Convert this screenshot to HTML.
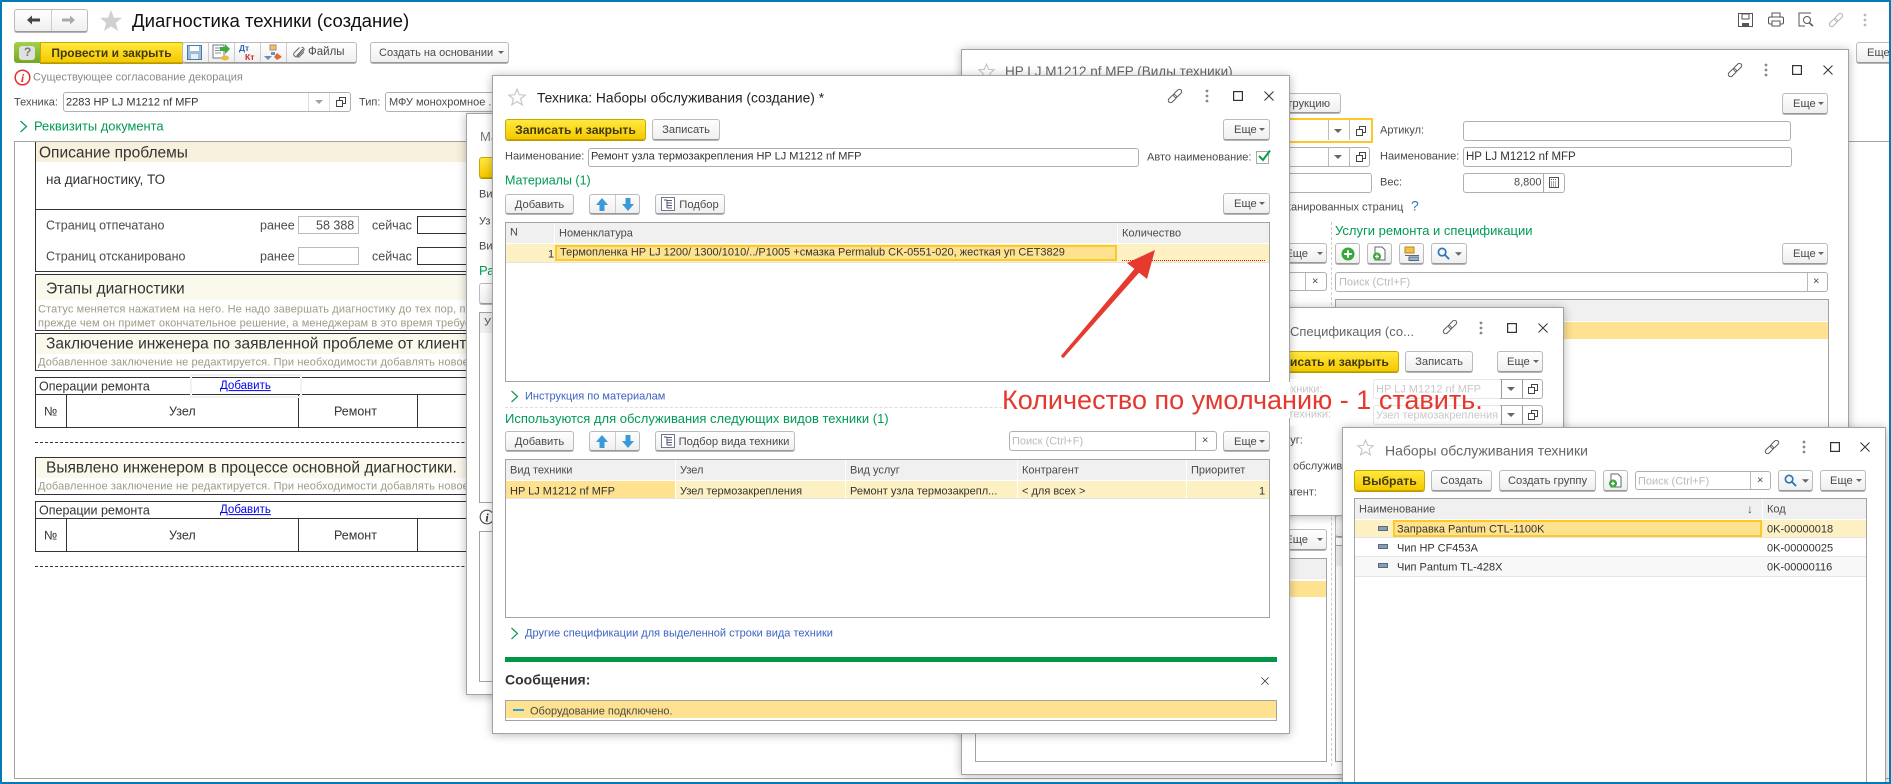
<!DOCTYPE html>
<html><head><meta charset="utf-8"><style>
html,body{margin:0;padding:0;background:#fff}
#p{position:relative;width:1891px;height:784px;overflow:hidden;background:#fff;font-family:"Liberation Sans",sans-serif}
#p div,#p svg{position:absolute;box-sizing:border-box}
.t{white-space:nowrap;transform:translateY(calc(-50% + 3px));font-size:11px;line-height:1.2;color:#4a4a4a}
.d{color:#333}.g{color:#009a54;font-size:13px;transform:translateY(calc(-50% + 2px))}.l{color:#3b62c0;font-size:11px}
.w{background:#fff;border:1px solid #a3a3a3;box-shadow:0 1px 9px rgba(0,0,0,.28)}
.b{border:1px solid #bbb;border-bottom:1px solid #999;border-radius:3px;background:linear-gradient(#fff,#efefef);box-shadow:0 1px 0 #b5b5b5;font-size:11.2px;color:#4a4a4a;text-align:center;line-height:20px;white-space:nowrap}
.y{border:1px solid #c9a900;border-radius:3px;background:linear-gradient(#ffe93f,#f6c900);box-shadow:0 1px 0 #b59a00;font-size:12.2px;font-weight:bold;color:#413a10;text-align:center;line-height:20px;white-space:nowrap}
.f{border:1px solid #b0b0b0;border-radius:3px;background:#fff}
.k{background:#333}.h{background:#f0f0f0}.r{background:#fdf1c4}.s{background:#fee28f}
.c{background:#fee28f;border:2px solid #fcc92a}
.n{color:#a09a84;font-size:11px;letter-spacing:.12px}
.x{background:#fbf8ec}
</style></head><body><div id="p">
<svg width="0" height="0"><defs>
<symbol id="star" viewBox="0 0 24 24"><polygon points="12,1.5 15,9 23,9.5 16.8,14.5 19,22.5 12,18 5,22.5 7.2,14.5 1,9.5 9,9" fill="none" stroke="#c4c4c4" stroke-width="1.5"/></symbol>
<symbol id="link" viewBox="0 0 16 16"><g transform="rotate(-45 8 8)" fill="none" stroke="#555" stroke-width="1"><rect x="-.5" y="5.7" width="9.5" height="4.6" rx="2.3"/><rect x="7" y="5.7" width="9.5" height="4.6" rx="2.3"/></g></symbol>
<symbol id="dots" viewBox="0 0 6 14"><circle cx="3" cy="2" r="1.4" fill="#888"/><circle cx="3" cy="7" r="1.4" fill="#888"/><circle cx="3" cy="12" r="1.4" fill="#888"/></symbol>
<symbol id="max" viewBox="0 0 10 10"><rect x=".6" y=".6" width="8.8" height="8.8" fill="none" stroke="#333" stroke-width="1.2"/></symbol>
<symbol id="cl" viewBox="0 0 10 10"><path d="M.5 .5 L9.5 9.5 M9.5 .5 L.5 9.5" stroke="#333" stroke-width="1"/></symbol>
<symbol id="cpy" viewBox="0 0 10 10"><path d="M3.5 3 V.5 H9.5 V6.5 H7 M.5 3.5 H6.5 V9.5 H.5 Z" fill="none" stroke="#444" stroke-width="1"/></symbol>
<symbol id="dn" viewBox="0 0 8 4"><polygon points="0,0 8,0 4,4" fill="#666"/></symbol>
<symbol id="up" viewBox="0 0 12 13"><polygon points="6,0 12,7 8.5,7 8.5,13 3.5,13 3.5,7 0,7" fill="#3a9ad8"/></symbol>
<symbol id="do" viewBox="0 0 12 13"><polygon points="6,13 12,6 8.5,6 8.5,0 3.5,0 3.5,6 0,6" fill="#3a9ad8"/></symbol>
<symbol id="pick" viewBox="0 0 14 14"><rect x=".5" y=".5" width="13" height="13" fill="#fff" stroke="#6a7a8a"/><path d="M3 3 H6 M6 3 V11 M6 6 H11 M6 8.5 H11 M6 11 H11 M6 3.5 H11" stroke="#557" stroke-width="1"/></symbol>
<symbol id="mag" viewBox="0 0 14 14"><circle cx="5.5" cy="5.5" r="4" fill="none" stroke="#2f78b7" stroke-width="1.8"/><path d="M8.5 8.5 L13 13" stroke="#2f78b7" stroke-width="2"/></symbol>
<symbol id="add" viewBox="0 0 15 15"><path d="M3 1 H10 L13 4 V14 H3 Z" fill="#fff" stroke="#667"/><circle cx="5" cy="10.5" r="4" fill="#3aa83f"/><path d="M3 10.5 H7 M5 8.5 V12.5" stroke="#fff" stroke-width="1.2"/></symbol>
<symbol id="folder" viewBox="0 0 15 15"><rect x="1" y="1" width="9" height="6" fill="#f3c04a" stroke="#b68a20"/><rect x="1" y="9" width="14" height="1" fill="#667"/><rect x="5" y="11" width="10" height="3.5" fill="#8db4dc" stroke="#567"/></symbol>
</defs></svg>

<!-- MAIN -->
<div class="b" style="left:14px;top:9px;width:74px;height:23px"></div>
<div style="left:51px;top:10px;width:1px;height:21px;background:#ccc"></div>
<svg style="left:26px;top:14px" width="15" height="12"><path d="M1 6 L6 1.5 V4.5 H14 V7.5 H6 V10.5 Z" fill="#444"/></svg>
<svg style="left:61px;top:14px" width="15" height="12"><path d="M14 6 L9 1.5 V4.5 H1 V7.5 H9 V10.5 Z" fill="#aaa"/></svg>
<svg style="left:99px;top:9px" width="24" height="23" viewBox="0 0 24 24"><polygon points="12,1 15,9 23.5,9.3 17,14.5 19.3,23 12,18.2 4.7,23 7,14.5 .5,9.3 9,9" fill="#d0d0d0"/></svg>
<div class="t" style="left:132px;top:18px;font-size:18.6px;color:#111">Диагностика техники (создание)</div>

<div style="left:14px;top:42px;width:27px;height:21px;background:linear-gradient(#a4d04a,#74a821);border-radius:3px 0 0 3px"></div>
<div style="left:19px;top:46px;width:16px;height:14px;background:#e0e0e0;border-radius:3px"></div>
<div class="t" style="left:24px;top:49px;font-size:12px;font-weight:bold;color:#777">?</div>
<div class="y" style="left:40px;top:42px;width:143px;height:21px;border-radius:0;font-size:12px">Провести и закрыть</div>
<div class="b" style="left:182px;top:42px;width:175px;height:21px"></div>
<div style="left:208px;top:43px;width:1px;height:19px;background:#ccc"></div>
<div style="left:234px;top:43px;width:1px;height:19px;background:#ccc"></div>
<div style="left:260px;top:43px;width:1px;height:19px;background:#ccc"></div>
<div style="left:286px;top:43px;width:1px;height:19px;background:#ccc"></div>
<svg style="left:187px;top:45px" width="15" height="15"><path d="M.5 .5 H14.5 V14.5 H.5 Z" fill="#9dbcd8" stroke="#4c7aa6"/><rect x="3" y="1" width="9" height="5" fill="#fff"/><rect x="4" y="9" width="7" height="5" fill="#e7eef5"/></svg>
<svg style="left:212px;top:44px" width="18" height="17"><rect x="1" y="1" width="11" height="13" fill="#fff" stroke="#778"/><path d="M3 4 H9 M3 6.5 H9 M3 9 H9" stroke="#889"/><path d="M8 3 H13 V0 L18 5 L13 10 V7 H8 Z" fill="#3cad3c"/><ellipse cx="13" cy="14" rx="4" ry="2.5" fill="#edbb3f"/></svg>
<div class="t" style="left:239px;top:45px;font-size:8.5px;color:#2b68b0;font-weight:bold">Дт</div>
<div class="t" style="left:245px;top:54px;font-size:8.5px;color:#c52a20;font-weight:bold">Кт</div>
<svg style="left:264px;top:44px" width="18" height="17"><rect x="6" y="1" width="6" height="5" fill="#f1c45a" stroke="#a88"/><rect x="7" y="8" width="4" height="3" fill="#6a90bc"/><polygon points="13,9 18,13 13,16 10,13" fill="#dd6a3a"/><polygon points="0,12 8,12 4,16" fill="#6a8cb0"/></svg>
<svg style="left:292px;top:46px" width="13" height="13" viewBox="0 0 13 13"><path d="M11 3 L5 9.5 A1.5 1.5 0 0 0 7 11 L12 6 M9.5 1.5 A2 2 0 0 1 12 4 L5.5 10.5 A2.6 2.6 0 0 1 2 7 L7.5 1.5" fill="none" stroke="#666" stroke-width="1"/></svg>
<div class="t" style="left:308px;top:50px;font-size:11.5px">Файлы</div>
<div class="b" style="left:370px;top:42px;width:139px;height:21px;text-align:left;padding-left:8px;font-size:11px">Создать на основании</div>
<svg style="left:498px;top:51px" width="6" height="3"><use href="#dn"/></svg>
<svg style="left:1738px;top:13px" width="15" height="14"><path d="M.5 .5 H14.5 V13.5 H.5 Z" fill="#fff" stroke="#555"/><rect x="4" y="1" width="7" height="5" fill="none" stroke="#555"/><rect x="4" y="10" width="7" height="4" fill="#555"/></svg>
<svg style="left:1768px;top:12px" width="16" height="15"><rect x="4" y="1" width="8" height="4" fill="none" stroke="#555"/><rect x=".5" y="5" width="15" height="7" rx="1.5" fill="#fff" stroke="#555"/><rect x="4" y="9" width="8" height="5" fill="#fff" stroke="#555"/></svg>
<svg style="left:1798px;top:12px" width="16" height="15"><path d="M13 1 H1 V14 H7" fill="none" stroke="#555"/><circle cx="9" cy="8" r="3.5" fill="none" stroke="#555"/><path d="M11.5 11 L15 14" stroke="#555" stroke-width="1.5"/></svg>
<svg style="left:1828px;top:12px" width="16" height="16"><use href="#link" opacity=".45"/></svg>
<svg style="left:1862px;top:13px" width="6" height="14"><use href="#dots" opacity=".6"/></svg>
<div class="b" style="left:1856px;top:42px;width:50px;height:21px;text-align:left;padding-left:10px">Еще</div>

<svg style="left:14px;top:69px" width="17" height="17"><circle cx="8.5" cy="8.5" r="7.3" fill="#fff" stroke="#e23030" stroke-width="1.5"/><text x="8.5" y="13" font-family="Liberation Serif" font-size="12" font-weight="bold" font-style="italic" fill="#e23030" text-anchor="middle">i</text></svg>
<div class="t" style="left:33px;top:75px;color:#8a8a8a">Существующее согласование декорация</div>
<div class="t" style="left:14px;top:100px">Техника:</div>
<div class="f" style="left:63px;top:92px;width:288px;height:20px"></div>
<div class="t d" style="left:66px;top:100px">2283 HP LJ M1212 nf MFP</div>
<div style="left:308px;top:93px;width:1px;height:18px;background:#ddd"></div>
<div style="left:329px;top:93px;width:1px;height:18px;background:#ddd"></div>
<svg style="left:315px;top:100px" width="8" height="4"><use href="#dn" opacity=".6"/></svg>
<svg style="left:336px;top:97px" width="10" height="10"><use href="#cpy"/></svg>
<div class="t" style="left:359px;top:100px">Тип:</div>
<div class="f" style="left:385px;top:92px;width:200px;height:20px"></div>
<div class="t" style="left:389px;top:100px;font-size:11px">МФУ монохромное ...</div>
<svg style="left:19px;top:120px" width="9" height="13"><path d="M1.5 1 L7.5 6.5 L1.5 12" fill="none" stroke="#009a54" stroke-width="1.2"/></svg>
<div class="t g" style="left:34px;top:124px;font-size:12.9px">Реквизиты документа</div>

<div style="left:14px;top:141px;width:1875px;height:638px;border:1px solid #a3a3a3;border-right:0"></div>
<div style="left:35px;top:142px;width:1px;height:130px;background:#333"></div>
<div style="left:36px;top:142px;width:600px;height:20px;background:#f7f0dc"></div>
<div class="t d" style="left:39px;top:151px;font-size:15.5px">Описание проблемы</div>
<div class="t d" style="left:46px;top:177px;font-size:13.5px">на диагностику, ТО</div>
<div class="k" style="left:35px;top:209px;width:600px;height:1px"></div>
<div class="t" style="left:46px;top:223px;font-size:12.5px">Страниц отпечатано</div>
<div class="t" style="left:260px;top:223px;font-size:12.5px">ранее</div>
<div style="left:298px;top:216px;width:61px;height:18px;border:1px solid #bbb"></div>
<div class="t" style="left:316px;top:223px;font-size:12.5px">58 388</div>
<div class="t" style="left:372px;top:223px;font-size:12.5px">сейчас</div>
<div style="left:417px;top:216px;width:120px;height:18px;border:1px solid #333"></div>
<div class="t" style="left:46px;top:254px;font-size:12.5px">Страниц отсканировано</div>
<div class="t" style="left:260px;top:254px;font-size:12.5px">ранее</div>
<div style="left:298px;top:247px;width:61px;height:18px;border:1px solid #bbb"></div>
<div class="t" style="left:372px;top:254px;font-size:12.5px">сейчас</div>
<div style="left:417px;top:247px;width:120px;height:18px;border:1px solid #333"></div>
<div class="k" style="left:35px;top:271px;width:600px;height:1px"></div>

<div style="left:35px;top:274px;width:600px;height:57px;border:1px solid #333"></div>
<div class="x" style="left:36px;top:275px;width:598px;height:25px"></div>
<div class="t d" style="left:46px;top:287px;font-size:15.5px">Этапы диагностики</div>
<div class="t n" style="left:38px;top:307px">Статус меняется нажатием на него. Не надо завершать диагностику до тех пор, пока</div>
<div class="t n" style="left:38px;top:321px">прежде чем он примет окончательное решение, а менеджерам в это время требуется</div>
<div style="left:35px;top:333px;width:600px;height:38px;border:1px solid #333"></div>
<div class="x" style="left:36px;top:334px;width:598px;height:20px"></div>
<div class="t d" style="left:46px;top:342px;font-size:15.5px">Заключение инженера по заявленной проблеме от клиента</div>
<div class="t n" style="left:38px;top:360px">Добавленное заключение не редактируется. При необходимости добавлять новое</div>

<div style="left:35px;top:377px;width:600px;height:51px;border:1px solid #333"></div>
<div class="k" style="left:35px;top:394px;width:600px;height:1px"></div>
<div class="k" style="left:66px;top:394px;width:1px;height:33px"></div>
<div class="k" style="left:298px;top:394px;width:1px;height:33px"></div>
<div class="k" style="left:417px;top:394px;width:1px;height:33px"></div>
<div style="left:190px;top:374px;width:112px;height:24px;border:2px solid #f2f2f2"></div>
<div class="t d" style="left:39px;top:384px;font-size:12.5px">Операции ремонта</div>
<div class="t" style="left:220px;top:384px;color:#0000ee;text-decoration:underline;font-size:11.5px">Добавить</div>
<div class="t d" style="left:44px;top:409px;font-size:12.5px">№</div>
<div class="t d" style="left:169px;top:409px;font-size:12.5px">Узел</div>
<div class="t d" style="left:334px;top:409px;font-size:12.5px">Ремонт</div>
<div style="left:35px;top:442px;width:600px;height:1px;border-top:1px dashed #333"></div>

<div style="left:35px;top:457px;width:600px;height:38px;border:1px solid #333"></div>
<div class="x" style="left:36px;top:458px;width:598px;height:20px"></div>
<div class="t d" style="left:46px;top:466px;font-size:15.5px">Выявлено инженером в процессе основной диагностики.</div>
<div class="t n" style="left:38px;top:484px">Добавленное заключение не редактируется. При необходимости добавлять новое</div>

<div style="left:35px;top:501px;width:600px;height:51px;border:1px solid #333"></div>
<div class="k" style="left:35px;top:518px;width:600px;height:1px"></div>
<div class="k" style="left:66px;top:518px;width:1px;height:33px"></div>
<div class="k" style="left:298px;top:518px;width:1px;height:33px"></div>
<div class="k" style="left:417px;top:518px;width:1px;height:33px"></div>
<div class="t d" style="left:39px;top:508px;font-size:12.5px">Операции ремонта</div>
<div class="t" style="left:220px;top:508px;color:#0000ee;text-decoration:underline;font-size:11.5px">Добавить</div>
<div class="t d" style="left:44px;top:533px;font-size:12.5px">№</div>
<div class="t d" style="left:169px;top:533px;font-size:12.5px">Узел</div>
<div class="t d" style="left:334px;top:533px;font-size:12.5px">Ремонт</div>
<div style="left:35px;top:566px;width:600px;height:1px;border-top:1px dashed #333"></div>

<!-- WINDOW A -->
<div class="w" style="left:466px;top:113px;width:200px;height:582px"></div>
<div class="t" style="left:480px;top:134px;font-size:13px;color:#777">Ма</div>
<div class="y" style="left:479px;top:157px;width:120px;height:21px"></div>
<div class="t" style="left:479px;top:192px">Ви</div>
<div class="t" style="left:479px;top:219px">Уз</div>
<div class="t" style="left:479px;top:244px">Ви</div>
<div class="t g" style="left:479px;top:269px">Ра</div>
<div class="b" style="left:479px;top:283px;width:60px;height:21px"></div>
<div style="left:479px;top:312px;width:190px;height:191px;border:1px solid #a3a3a3"></div>
<div class="h" style="left:480px;top:313px;width:188px;height:20px"></div>
<div class="t" style="left:484px;top:320px">У</div>
<svg style="left:479px;top:509px" width="15" height="16"><circle cx="8" cy="8" r="6.8" fill="#fff" stroke="#555" stroke-width="1.2"/><text x="8" y="12.5" font-family="Liberation Serif" font-size="12" font-weight="bold" font-style="italic" fill="#333" text-anchor="middle">i</text></svg>
<div style="left:479px;top:531px;width:190px;height:151px;border:1px solid #a3a3a3"></div>

<!-- WINDOW C -->
<div class="w" style="left:961px;top:49px;width:888px;height:726px"></div>
<svg style="left:978px;top:63px" width="17" height="17"><use href="#star"/></svg>
<div class="t" style="left:1005px;top:69px;font-size:13.5px;color:#666">HP LJ M1212 nf MFP (Виды техники)</div>
<svg style="left:1727px;top:62px" width="16" height="16"><use href="#link"/></svg>
<svg style="left:1763px;top:63px" width="6" height="14"><use href="#dots"/></svg>
<svg style="left:1792px;top:65px" width="10" height="10"><use href="#max"/></svg>
<svg style="left:1823px;top:65px" width="10" height="10"><use href="#cl"/></svg>
<div class="b" style="left:1250px;top:93px;width:91px;height:20px;text-align:right;padding-right:10px">Инструкцию</div>
<div class="b" style="left:1782px;top:93px;width:46px;height:21px;text-align:left;padding-left:10px">Еще</div>
<svg style="left:1818px;top:102px" width="6" height="3"><use href="#dn"/></svg>
<div style="left:1100px;top:118px;width:273px;height:25px;border:2px solid #fcc92a"></div>
<div style="left:1328px;top:120px;width:1px;height:20px;background:#bbb"></div>
<div style="left:1349px;top:120px;width:1px;height:20px;background:#bbb"></div>
<svg style="left:1334px;top:129px" width="8" height="4"><use href="#dn"/></svg>
<svg style="left:1356px;top:126px" width="10" height="10"><use href="#cpy"/></svg>
<div class="f" style="left:1100px;top:147px;width:270px;height:20px"></div>
<div style="left:1328px;top:148px;width:1px;height:18px;background:#bbb"></div>
<div style="left:1349px;top:148px;width:1px;height:18px;background:#bbb"></div>
<svg style="left:1334px;top:155px" width="8" height="4"><use href="#dn"/></svg>
<svg style="left:1356px;top:152px" width="10" height="10"><use href="#cpy"/></svg>
<div class="f" style="left:1100px;top:173px;width:272px;height:20px"></div>
<div class="t" style="left:1380px;top:128px">Артикул:</div>
<div class="t" style="left:1380px;top:154px">Наименование:</div>
<div class="t" style="left:1380px;top:180px">Вес:</div>
<div class="f" style="left:1463px;top:121px;width:328px;height:20px"></div>
<div class="f" style="left:1463px;top:147px;width:329px;height:20px"></div>
<div class="t d" style="left:1466px;top:155px;font-size:11.5px">HP LJ M1212 nf MFP</div>
<div class="f" style="left:1463px;top:173px;width:102px;height:20px"></div>
<div style="left:1543px;top:174px;width:1px;height:18px;background:#aaa"></div>
<div class="t" style="left:1514px;top:180px">8,800</div>
<svg style="left:1549px;top:177px" width="10" height="11"><rect x=".5" y=".5" width="9" height="10" fill="none" stroke="#555"/><path d="M2 2.5 H8 M2 5 H8 M2 7 H8 M2 9 H8" stroke="#555" stroke-dasharray="1 1"/></svg>
<div class="t" style="left:1267px;top:205px">Отсканированных страниц</div>
<div class="t" style="left:1411px;top:203px;font-size:14px;color:#2a7ac0">?</div>
<div style="left:1331px;top:222px;width:1px;height:544px;border-left:1px dashed #ccc"></div>
<div class="t g" style="left:1335px;top:229px">Услуги ремонта и спецификации</div>
<div class="b" style="left:1280px;top:243px;width:47px;height:20px;text-align:right;padding-right:18px">Еще</div>
<svg style="left:1317px;top:252px" width="6" height="3"><use href="#dn"/></svg>
<div class="b" style="left:1335px;top:243px;width:25px;height:21px"></div>
<svg style="left:1341px;top:247px" width="14" height="14"><circle cx="7" cy="7" r="6.5" fill="#38a83d"/><path d="M3.2 7 H10.8 M7 3.2 V10.8" stroke="#fff" stroke-width="2"/></svg>
<div class="b" style="left:1367px;top:243px;width:25px;height:21px"></div>
<svg style="left:1372px;top:246px" width="15" height="15"><use href="#add"/></svg>
<div class="b" style="left:1399px;top:243px;width:25px;height:21px"></div>
<svg style="left:1404px;top:246px" width="15" height="15"><use href="#folder"/></svg>
<div class="b" style="left:1431px;top:243px;width:36px;height:21px"></div>
<svg style="left:1437px;top:247px" width="13" height="13"><use href="#mag"/></svg>
<svg style="left:1455px;top:252px" width="7" height="4"><use href="#dn"/></svg>
<div class="b" style="left:1782px;top:243px;width:46px;height:21px;text-align:left;padding-left:10px">Еще</div>
<svg style="left:1818px;top:252px" width="6" height="3"><use href="#dn"/></svg>
<div class="f" style="left:1280px;top:272px;width:47px;height:19px"></div>
<div style="left:1305px;top:273px;width:1px;height:17px;background:#bbb"></div>
<div class="t" style="left:1312px;top:279px">×</div>
<div class="f" style="left:1335px;top:272px;width:493px;height:20px"></div>
<div style="left:1807px;top:273px;width:1px;height:18px;background:#bbb"></div>
<div class="t" style="left:1813px;top:279px">×</div>
<div class="t" style="left:1339px;top:280px;color:#bbb">Поиск (Ctrl+F)</div>
<div style="left:1335px;top:299px;width:494px;height:463px;border:1px solid #a3a3a3"></div>
<div class="h" style="left:1336px;top:300px;width:492px;height:21px"></div>
<div class="s" style="left:1336px;top:322px;width:492px;height:17px"></div>
<div class="b" style="left:1280px;top:529px;width:47px;height:21px;text-align:right;padding-right:18px">Еще</div>
<svg style="left:1317px;top:538px" width="6" height="3"><use href="#dn"/></svg>
<div style="left:975px;top:558px;width:352px;height:204px;border:1px solid #a3a3a3"></div>
<div class="h" style="left:976px;top:559px;width:350px;height:20px"></div>
<div class="s" style="left:976px;top:581px;width:350px;height:16px"></div>
<div class="b" style="left:1335px;top:515px;width:30px;height:22px"></div>
<div style="left:1335px;top:545px;width:30px;height:217px;border:1px solid #a3a3a3;background:#fff"></div>
<div class="h" style="left:1336px;top:546px;width:28px;height:20px"></div>

<!-- WINDOW D -->
<div class="w" style="left:1240px;top:307px;width:324px;height:209px"></div>
<div class="t" style="left:1290px;top:329px;font-size:13px;color:#666">Спецификация (со...</div>
<svg style="left:1442px;top:319px" width="16" height="16"><use href="#link"/></svg>
<svg style="left:1478px;top:321px" width="6" height="14"><use href="#dots"/></svg>
<svg style="left:1507px;top:323px" width="10" height="10"><use href="#max"/></svg>
<svg style="left:1538px;top:323px" width="10" height="10"><use href="#cl"/></svg>
<div class="y" style="left:1258px;top:351px;width:141px;height:21px">Записать и закрыть</div>
<div class="b" style="left:1405px;top:351px;width:68px;height:21px">Записать</div>
<div class="b" style="left:1497px;top:351px;width:46px;height:21px;text-align:left;padding-left:9px">Еще</div>
<svg style="left:1533px;top:360px" width="6" height="3"><use href="#dn"/></svg>
<div class="t" style="left:1257px;top:387px">Вид техники:</div>
<div class="t" style="left:1262px;top:412px">Узел техники:</div>
<div class="t" style="left:1250px;top:438px">Вид услуг:</div>
<div class="t" style="left:1293px;top:464px">обслуживания</div>
<div class="t" style="left:1257px;top:490px">Контрагент:</div>
<div class="f" style="left:1373px;top:379px;width:170px;height:20px"></div>
<div class="t" style="left:1376px;top:387px;color:#555">HP LJ M1212 nf MFP</div>
<div style="left:1501px;top:380px;width:1px;height:18px;background:#999"></div>
<div style="left:1522px;top:380px;width:1px;height:18px;background:#999"></div>
<svg style="left:1507px;top:387px" width="8" height="4"><use href="#dn"/></svg>
<svg style="left:1528px;top:384px" width="10" height="10"><use href="#cpy"/></svg>
<div class="f" style="left:1373px;top:405px;width:170px;height:20px;overflow:hidden"></div>
<div class="t" style="left:1376px;top:413px;width:125px;overflow:hidden;color:#555">Узел термозакрепления</div>
<div style="left:1501px;top:406px;width:1px;height:18px;background:#999"></div>
<div style="left:1522px;top:406px;width:1px;height:18px;background:#999"></div>
<svg style="left:1507px;top:413px" width="8" height="4"><use href="#dn"/></svg>
<svg style="left:1528px;top:410px" width="10" height="10"><use href="#cpy"/></svg>

<!-- WINDOW B -->
<div class="w" style="left:492px;top:75px;width:798px;height:659px"></div>
<svg style="left:508px;top:88px" width="18" height="18"><use href="#star"/></svg>
<div class="t" style="left:537px;top:96px;font-size:13.8px;color:#222">Техника: Наборы обслуживания (создание) *</div>
<svg style="left:1167px;top:88px" width="16" height="16"><use href="#link"/></svg>
<svg style="left:1204px;top:89px" width="6" height="14"><use href="#dots"/></svg>
<svg style="left:1233px;top:91px" width="10" height="10"><use href="#max"/></svg>
<svg style="left:1264px;top:91px" width="10" height="10"><use href="#cl"/></svg>
<div class="y" style="left:505px;top:119px;width:141px;height:21px">Записать и закрыть</div>
<div class="b" style="left:652px;top:119px;width:68px;height:21px">Записать</div>
<div class="b" style="left:1223px;top:119px;width:47px;height:21px;text-align:left;padding-left:10px">Еще</div>
<svg style="left:1259px;top:128px" width="6" height="3"><use href="#dn"/></svg>
<div class="t" style="left:505px;top:154px">Наименование:</div>
<div class="f" style="left:588px;top:148px;width:551px;height:19px"></div>
<div class="t d" style="left:591px;top:154px">Ремонт узла термозакрепления HP LJ M1212 nf MFP</div>
<div class="t" style="left:1147px;top:155px">Авто наименование:</div>
<div style="left:1256px;top:151px;width:13px;height:13px;border:1px solid #aaa"></div>
<svg style="left:1257px;top:149px" width="14" height="14"><path d="M2 7 L6 11 L13 1.5" fill="none" stroke="#0c9a4e" stroke-width="2"/></svg>
<div class="t g" style="left:505px;top:179px;font-size:12.5px">Материалы (1)</div>
<div class="b" style="left:505px;top:194px;width:69px;height:20px">Добавить</div>
<div class="b" style="left:589px;top:194px;width:51px;height:20px"></div>
<div style="left:615px;top:195px;width:1px;height:18px;background:#ccc"></div>
<svg style="left:596px;top:198px" width="12" height="13"><use href="#up"/></svg>
<svg style="left:622px;top:198px" width="12" height="13"><use href="#do"/></svg>
<div class="b" style="left:655px;top:194px;width:70px;height:20px;padding-left:18px">Подбор</div>
<svg style="left:661px;top:197px" width="14" height="14"><use href="#pick"/></svg>
<div class="b" style="left:1223px;top:193px;width:47px;height:21px;text-align:left;padding-left:10px">Еще</div>
<svg style="left:1259px;top:202px" width="6" height="3"><use href="#dn"/></svg>

<div style="left:505px;top:222px;width:765px;height:160px;border:1px solid #a3a3a3"></div>
<div class="h" style="left:506px;top:223px;width:763px;height:20px"></div>
<div style="left:554px;top:223px;width:1px;height:20px;background:#fff"></div>
<div style="left:1117px;top:223px;width:1px;height:20px;background:#fff"></div>
<div class="t" style="left:510px;top:230px">N</div>
<div class="t" style="left:559px;top:231px">Номенклатура</div>
<div class="t" style="left:1122px;top:231px">Количество</div>
<div class="r" style="left:506px;top:244px;width:763px;height:18px"></div>
<div style="left:506px;top:262px;width:763px;height:1px;background:#e5e5e5"></div>
<div class="c" style="left:555px;top:245px;width:562px;height:16px"></div>
<div class="t" style="left:548px;top:252px;color:#333">1</div>
<div class="t d" style="left:560px;top:250px">Термопленка HP LJ 1200/ 1300/1010/../P1005 +смазка Permalub CK-0551-020, жесткая уп CET3829</div>
<div style="left:1122px;top:260px;width:143px;height:1px;border-top:1px dotted #e11"></div>

<svg style="left:510px;top:390px" width="9" height="13"><path d="M1.5 1 L7.5 6.5 L1.5 12" fill="none" stroke="#0c9a4e" stroke-width="1.2"/></svg>
<div class="t l" style="left:525px;top:394px">Инструкция по материалам</div>
<div style="left:505px;top:407px;width:772px;height:1px;border-top:1px dashed #ddd"></div>
<div class="t g" style="left:505px;top:417px">Используются для обслуживания следующих видов техники (1)</div>
<div class="b" style="left:505px;top:431px;width:69px;height:20px">Добавить</div>
<div class="b" style="left:589px;top:431px;width:51px;height:20px"></div>
<div style="left:615px;top:432px;width:1px;height:18px;background:#ccc"></div>
<svg style="left:596px;top:435px" width="12" height="13"><use href="#up"/></svg>
<svg style="left:622px;top:435px" width="12" height="13"><use href="#do"/></svg>
<div class="b" style="left:655px;top:431px;width:140px;height:20px;padding-left:18px">Подбор вида техники</div>
<svg style="left:661px;top:434px" width="14" height="14"><use href="#pick"/></svg>
<div class="f" style="left:1009px;top:431px;width:208px;height:20px"></div>
<div style="left:1195px;top:432px;width:1px;height:18px;background:#aaa"></div>
<div class="t" style="left:1202px;top:438px">×</div>
<div class="t" style="left:1012px;top:439px;color:#bbb">Поиск (Ctrl+F)</div>
<div class="b" style="left:1223px;top:431px;width:47px;height:20px;text-align:left;padding-left:10px">Еще</div>
<svg style="left:1259px;top:440px" width="6" height="3"><use href="#dn"/></svg>

<div style="left:505px;top:459px;width:765px;height:159px;border:1px solid #a3a3a3"></div>
<div class="h" style="left:506px;top:460px;width:763px;height:20px"></div>
<div style="left:675px;top:460px;width:1px;height:20px;background:#fff"></div>
<div style="left:845px;top:460px;width:1px;height:20px;background:#fff"></div>
<div style="left:1017px;top:460px;width:1px;height:20px;background:#fff"></div>
<div style="left:1186px;top:460px;width:1px;height:20px;background:#fff"></div>
<div class="t" style="left:510px;top:468px">Вид техники</div>
<div class="t" style="left:680px;top:468px">Узел</div>
<div class="t" style="left:850px;top:468px">Вид услуг</div>
<div class="t" style="left:1022px;top:468px">Контрагент</div>
<div class="t" style="left:1191px;top:468px">Приоритет</div>
<div class="r" style="left:506px;top:481px;width:763px;height:17px"></div>
<div class="s" style="left:506px;top:481px;width:169px;height:17px"></div>
<div style="left:506px;top:498px;width:763px;height:1px;background:#e5e5e5"></div>
<div style="left:675px;top:481px;width:1px;height:17px;background:#fff"></div>
<div style="left:845px;top:481px;width:1px;height:17px;background:#fff"></div>
<div style="left:1017px;top:481px;width:1px;height:17px;background:#fff"></div>
<div style="left:1186px;top:481px;width:1px;height:17px;background:#fff"></div>
<div class="t d" style="left:510px;top:489px">HP LJ M1212 nf MFP</div>
<div class="t d" style="left:680px;top:489px">Узел термозакрепления</div>
<div class="t d" style="left:850px;top:489px">Ремонт узла термозакрепл...</div>
<div class="t d" style="left:1022px;top:489px">&lt; для всех &gt;</div>
<div class="t d" style="left:1259px;top:489px">1</div>
<svg style="left:510px;top:627px" width="9" height="13"><path d="M1.5 1 L7.5 6.5 L1.5 12" fill="none" stroke="#0c9a4e" stroke-width="1.2"/></svg>
<div class="t l" style="left:525px;top:631px">Другие спецификации для выделенной строки вида техники</div>
<div style="left:505px;top:657px;width:772px;height:5px;background:#009646"></div>
<div class="t" style="left:505px;top:677px;font-size:14px;font-weight:bold;color:#333">Сообщения:</div>
<svg style="left:1261px;top:677px" width="8" height="8"><use href="#cl"/></svg>
<div style="left:505px;top:700px;width:772px;height:21px;border:1px solid #a3a3a3;background:#fff"></div>
<div class="s" style="left:506px;top:701px;width:770px;height:17px"></div>
<div style="left:513px;top:709px;width:11px;height:2px;background:#2ea0e0"></div>
<div class="t" style="left:530px;top:709px;font-size:11px">Оборудование подключено.</div>

<!-- annotation backing -->
<div style="left:1002px;top:382px;width:288px;height:36px;background:#fff"></div>
<div style="left:1290px;top:379px;width:210px;height:47px;background:rgba(255,255,255,.68)"></div>

<!-- WINDOW E -->
<div class="w" style="left:1342px;top:427px;width:544px;height:360px"></div>
<svg style="left:1357px;top:439px" width="17" height="17"><use href="#star"/></svg>
<div class="t" style="left:1385px;top:448px;font-size:14px;color:#666">Наборы обслуживания техники</div>
<svg style="left:1764px;top:439px" width="16" height="16"><use href="#link"/></svg>
<svg style="left:1801px;top:440px" width="6" height="14"><use href="#dots"/></svg>
<svg style="left:1830px;top:442px" width="10" height="10"><use href="#max"/></svg>
<svg style="left:1860px;top:442px" width="10" height="10"><use href="#cl"/></svg>
<div class="y" style="left:1354px;top:470px;width:71px;height:21px">Выбрать</div>
<div class="b" style="left:1431px;top:470px;width:61px;height:21px">Создать</div>
<div class="b" style="left:1499px;top:470px;width:97px;height:21px">Создать группу</div>
<div class="b" style="left:1603px;top:470px;width:25px;height:21px"></div>
<svg style="left:1608px;top:473px" width="15" height="15"><use href="#add"/></svg>
<div class="f" style="left:1635px;top:471px;width:136px;height:19px"></div>
<div style="left:1750px;top:472px;width:1px;height:17px;background:#bbb"></div>
<div class="t" style="left:1757px;top:478px">×</div>
<div class="t" style="left:1638px;top:479px;color:#bbb">Поиск (Ctrl+F)</div>
<div class="b" style="left:1778px;top:470px;width:35px;height:21px"></div>
<svg style="left:1784px;top:474px" width="13" height="13"><use href="#mag"/></svg>
<svg style="left:1802px;top:479px" width="7" height="4"><use href="#dn"/></svg>
<div class="b" style="left:1820px;top:470px;width:46px;height:21px;text-align:left;padding-left:9px">Еще</div>
<svg style="left:1856px;top:479px" width="6" height="3"><use href="#dn"/></svg>

<div style="left:1354px;top:498px;width:513px;height:290px;border:1px solid #a3a3a3"></div>
<div class="h" style="left:1355px;top:499px;width:511px;height:20px"></div>
<div style="left:1762px;top:499px;width:1px;height:20px;background:#fff"></div>
<div class="t" style="left:1359px;top:507px">Наименование</div>
<div class="t" style="left:1747px;top:506px;font-size:12px;color:#555">↓</div>
<div class="t" style="left:1767px;top:507px">Код</div>
<div class="r" style="left:1355px;top:520px;width:511px;height:17px"></div>
<div class="c" style="left:1393px;top:520px;width:369px;height:17px"></div>
<div style="left:1355px;top:537px;width:511px;height:1px;background:#e5e5e5"></div>
<div style="left:1355px;top:556px;width:511px;height:1px;background:#e5e5e5"></div>
<div style="left:1355px;top:557px;width:511px;height:19px;background:#f8f8f8"></div>
<div style="left:1355px;top:576px;width:511px;height:1px;background:#e5e5e5"></div>
<div style="left:1378px;top:526px;width:10px;height:5px;background:#7aa0c4;border:1px solid #667"></div>
<div style="left:1378px;top:544px;width:10px;height:5px;background:#7aa0c4;border:1px solid #667"></div>
<div style="left:1378px;top:563px;width:10px;height:5px;background:#7aa0c4;border:1px solid #667"></div>
<div class="t d" style="left:1397px;top:527px">Заправка Pantum CTL-1100K</div>
<div class="t d" style="left:1397px;top:546px">Чип HP CF453A</div>
<div class="t d" style="left:1397px;top:565px">Чип Pantum TL-428X</div>
<div class="t d" style="left:1767px;top:527px">0K-00000018</div>
<div class="t d" style="left:1767px;top:546px">0K-00000025</div>
<div class="t d" style="left:1767px;top:565px">0K-00000116</div>

<!-- ANNOTATION -->
<div class="t" style="left:1002px;top:397px;font-size:27px;color:#e5382e">Количество по умолчанию - 1 ставить.</div>
<svg style="left:0;top:0" width="1891" height="784"><circle cx="1063" cy="356" r="1.7" fill="#e63a2e"/><polygon points="1064.2,357.1 1061.8,354.9 1137.7,265 1142.3,269" fill="#e63a2e"/><polygon points="1155,250 1127,263 1147,279" fill="#e63a2e"/></svg>

<!-- BLUE FRAME -->
<div style="left:0;top:0;width:1891px;height:2px;background:#0479b3"></div>
<div style="left:0;top:782px;width:1891px;height:2px;background:#0479b3"></div>
<div style="left:0;top:0;width:2px;height:784px;background:#0479b3"></div>
<div style="left:1889px;top:0;width:2px;height:784px;background:#0479b3"></div>
</div></body></html>
